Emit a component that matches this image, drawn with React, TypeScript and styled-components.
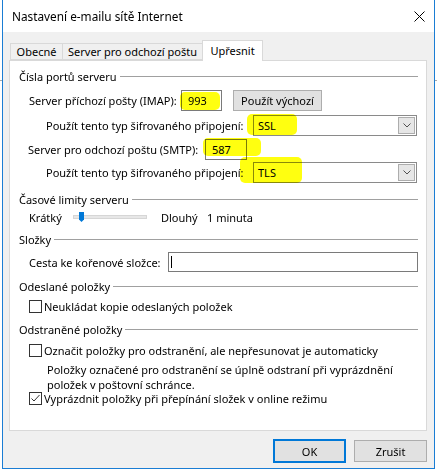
import React from 'react'
import styled, { createGlobalStyle } from 'styled-components'

const GlobalStyle = createGlobalStyle`
  html, body {
    margin: 0;
    padding: 0;
  }
  body {
    width: 437px;
    height: 474px;
    overflow: hidden;
    background: linear-gradient(#fff 80px, #a8a8a8 80px, #a8a8a8 81px, #fff 81px);
    font-family: 'Segoe UI', 'Noto Sans', sans-serif;
    font-size: 11px;
    line-height: 15px;
    color: #000;
  }
`

const Window = styled.div`
  box-sizing: border-box;
  width: 433px;
  height: 470px;
  margin: -1px 0 0 2px;
  border: 1px solid #1a7dd4;
  background: #f0f0f0;
  display: flex;
  flex-direction: column;
`

const TitleBar = styled.div`
  height: 32px;
  flex-shrink: 0;
  background: #fff;
  display: flex;
  align-items: center;
  justify-content: space-between;
  padding: 0 9px;
  font-size: 11.8px;
`

const Body = styled.div`
  padding: 8px 7px 0 6px;
  display: flex;
  flex-direction: column;
`

const TabStrip = styled.div`
  display: flex;
  align-items: flex-end;
  height: 20px;
  padding-left: 2px;
  position: relative;
  z-index: 1;
`

const Tab = styled.div<{ $w: number; $active?: boolean }>`
  box-sizing: border-box;
  width: ${p => p.$w}px;
  height: ${p => (p.$active ? 21 : 17)}px;
  margin-bottom: ${p => (p.$active ? -1 : 0)}px;
  border: 1px solid #d9d9d9;
  border-bottom: ${p => (p.$active ? 'none' : '1px solid #d9d9d9')};
  margin-left: -1px;
  background: ${p => (p.$active ? '#fff' : '#f0f0f0')};
  display: flex;
  align-items: center;
  justify-content: center;
  padding-bottom: ${p => (p.$active ? 2 : 0)}px;
  white-space: nowrap;
`

const Panel = styled.div`
  box-sizing: border-box;
  width: 418px;
  height: 371px;
  border: 1px solid #d9d9d9;
  background: #fff;
  padding: 7px 8px 0 9px;
  display: flex;
  flex-direction: column;
`

const GroupHeader = styled.div<{ $mt: number }>`
  display: flex;
  align-items: center;
  gap: 3px;
  height: 16px;
  margin-top: ${p => p.$mt}px;
  white-space: nowrap;
  &::after {
    content: '';
    flex: 1;
    height: 1px;
    background: #a0a0a0;
  }
`

const Row = styled.div<{ $mt: number; $indent: number; $h?: number }>`
  display: flex;
  align-items: center;
  height: ${p => p.$h ?? 21}px;
  margin-top: ${p => p.$mt}px;
  padding-left: ${p => p.$indent}px;
  white-space: nowrap;
`

const Label = styled.span<{ $w?: number }>`
  flex-shrink: 0;
  width: ${p => (p.$w ? `${p.$w}px` : 'auto')};
`

const Marked = styled.div`
  position: relative;
  display: flex;
`

const Highlight = styled.span<{ $x: number; $y: number; $w: number; $h: number }>`
  position: absolute;
  left: ${p => p.$x}px;
  top: ${p => p.$y}px;
  width: ${p => p.$w}px;
  height: ${p => p.$h}px;
  background: #ffff10;
  border-radius: 5px;
  filter: blur(0.6px);
  mix-blend-mode: multiply;
  pointer-events: none;
`

const TextBox = styled.div<{ $w: number; $h?: number }>`
  box-sizing: border-box;
  width: ${p => p.$w}px;
  height: ${p => p.$h ?? 21}px;
  border: 1px solid #7a7a7a;
  background: #fff;
  display: flex;
  align-items: center;
  padding-left: 6px;
`

const Caret = styled.span`
  width: 1px;
  height: 12px;
  background: #000;
  margin-left: -4px;
`

const Select = styled.div`
  box-sizing: border-box;
  width: 164px;
  height: 21px;
  border: 1px solid #8a8a8a;
  background: #fff;
  display: flex;
  align-items: center;
  justify-content: space-between;
  padding: 0 1px 0 4px;
`

const ArrowBox = styled.span`
  box-sizing: border-box;
  width: 17px;
  height: 17px;
  border: 1px solid #adadad;
  background: #e6e6e6;
  display: flex;
  align-items: center;
  justify-content: center;
`

const Button = styled.div<{ $w: number; $default?: boolean }>`
  box-sizing: border-box;
  width: ${p => p.$w}px;
  height: ${p => (p.$default ? 24 : 22)}px;
  border: ${p => (p.$default ? '2px solid #0078d7' : '1px solid #adadad')};
  background: #e1e1e1;
  display: flex;
  align-items: center;
  justify-content: center;
  white-space: nowrap;
`

const SmallButton = styled(Button)`
  height: 21px;
  margin-left: 11px;
`

const Track = styled.div`
  position: relative;
  box-sizing: border-box;
  width: 74px;
  height: 4px;
  margin-right: 14px;
  background: #e7e7e7;
  border: 1px solid #d6d6d6;
`

const Thumb = styled.span`
  position: absolute;
  left: 5px;
  top: -4px;
  width: 5px;
  height: 10px;
  background: #0078d7;
  clip-path: polygon(0 0, 100% 0, 100% 75%, 50% 100%, 0 75%);
`

const Check = styled.span`
  box-sizing: border-box;
  width: 13px;
  height: 13px;
  border: 1px solid #333;
  background: #fff;
  margin-right: 2px;
  flex-shrink: 0;
  display: flex;
`

const Note = styled.div`
  margin-top: 4px;
  padding-left: 28px;
  line-height: 15px;
`

const Footer = styled.div`
  display: flex;
  justify-content: flex-end;
  align-items: center;
  gap: 8px;
  margin-top: 8px;
`

const CloseIcon = () => (
  <svg width="11" height="11" viewBox="0 0 11 11">
    <path d="M0.5 0.5 L10.5 10.5 M10.5 0.5 L0.5 10.5" stroke="#000" strokeWidth="1" fill="none" />
  </svg>
)

const Chevron = () => (
  <svg width="8" height="5" viewBox="0 0 8 5">
    <polyline points="0.5,0.5 4,4 7.5,0.5" stroke="#505050" strokeWidth="1" fill="none" />
  </svg>
)

const CheckBox: React.FC<{ checked?: boolean }> = ({ checked }) => (
  <Check>
    {checked && (
      <svg width="11" height="11" viewBox="0 0 11 11">
        <polyline points="1.5,5.5 4,8 9.5,2" stroke="#333" strokeWidth="1" fill="none" />
      </svg>
    )}
  </Check>
)

const App: React.FC = () => {
  return (
    <>
      <GlobalStyle />
      <Window>
        <TitleBar>
          <span>Nastavení e-mailu sítě Internet</span>
          <CloseIcon />
        </TitleBar>
        <Body>
          <TabStrip>
            <Tab $w={53}>Obecné</Tab>
            <Tab $w={141}>Server pro odchozí poštu</Tab>
            <Tab $w={61} $active>Upřesnit</Tab>
          </TabStrip>
          <Panel>
            <GroupHeader $mt={0}>Čísla portů serveru</GroupHeader>
            <Row $mt={6} $indent={10}>
              <Label $w={152}>Server příchozí pošty (IMAP):</Label>
              <Marked>
                <TextBox $w={41}>993</TextBox>
                <Highlight $x={-1} $y={2} $w={40} $h={18} />
              </Marked>
              <SmallButton $w={89}>Použít výchozí</SmallButton>
            </Row>
            <Row $mt={4} $indent={27}>
              <Label $w={207}>Použít tento typ šifrovaného připojení:</Label>
              <Marked>
                <Select>
                  <span>SSL</span>
                  <ArrowBox><Chevron /></ArrowBox>
                </Select>
                <Highlight $x={-6} $y={-1} $w={50} $h={21} />
              </Marked>
            </Row>
            <Row $mt={3} $indent={9}>
              <Label $w={177}>Server pro odchozí poštu (SMTP):</Label>
              <Marked>
                <TextBox $w={42}>587</TextBox>
                <Highlight $x={-2} $y={-1} $w={58} $h={18} />
              </Marked>
            </Row>
            <Row $mt={2} $indent={27}>
              <Label $w={207}>Použít tento typ šifrovaného připojení:</Label>
              <Marked>
                <Select>
                  <span>TLS</span>
                  <ArrowBox><Chevron /></ArrowBox>
                </Select>
                <Highlight $x={-13} $y={-5} $w={62} $h={26} />
              </Marked>
            </Row>

            <GroupHeader $mt={8}>Časové limity serveru</GroupHeader>
            <Row $mt={2} $indent={10} $h={16}>
              <Label $w={44}>Krátký</Label>
              <Track>
                <Thumb />
              </Track>
              <Label $w={46}>Dlouhý</Label>
              <Label>1 minuta</Label>
            </Row>

            <GroupHeader $mt={6}>Složky</GroupHeader>
            <Row $mt={5} $indent={10} $h={20}>
              <Label $w={139}>Cesta ke kořenové složce:</Label>
              <TextBox $w={250} $h={20}>
                <Caret />
              </TextBox>
            </Row>

            <GroupHeader $mt={6}>Odeslané položky</GroupHeader>
            <Row $mt={4} $indent={10} $h={16}>
              <CheckBox />
              <Label>Neukládat kopie odeslaných položek</Label>
            </Row>

            <GroupHeader $mt={7}>Odstraněné položky</GroupHeader>
            <Row $mt={5} $indent={10} $h={16}>
              <CheckBox />
              <Label>Označit položky pro odstranění, ale nepřesunovat je automaticky</Label>
            </Row>
            <Note>
              Položky označené pro odstranění se úplně odstraní při vyprázdnění
              <br />
              položek v poštovní schránce.
            </Note>
            <Row $mt={-2} $indent={10} $h={16}>
              <CheckBox checked />
              <Label>Vyprázdnit položky při přepínání složek v online režimu</Label>
            </Row>
          </Panel>
          <Footer>
            <Button $w={73} $default>OK</Button>
            <Button $w={73}>Zrušit</Button>
          </Footer>
        </Body>
      </Window>
    </>
  )
}

export default App
